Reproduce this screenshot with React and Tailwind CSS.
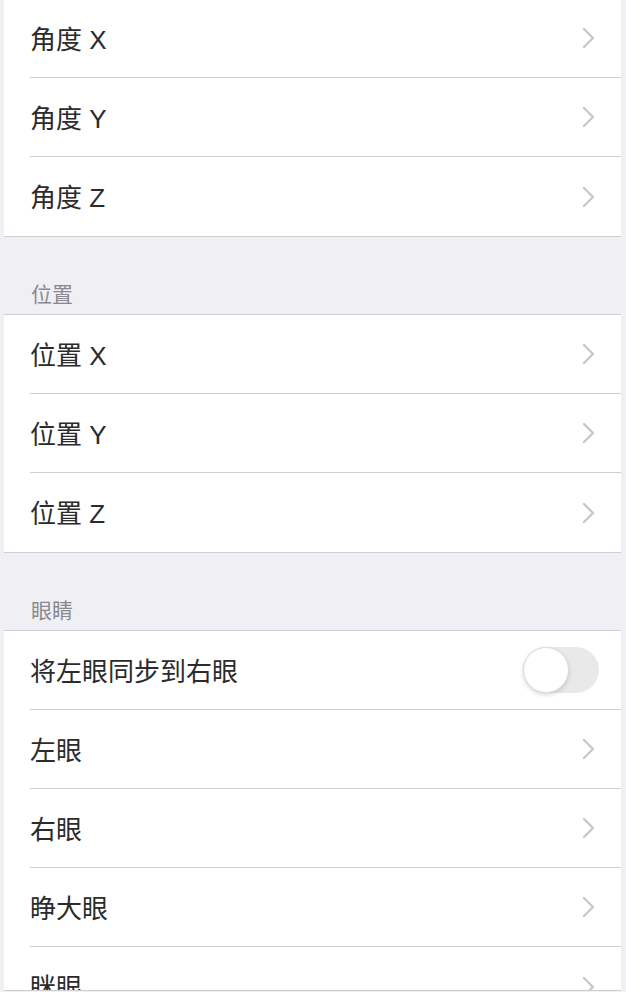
import React from 'react';

const font = { fontFamily: '"Liberation Sans", "Noto Sans CJK SC", sans-serif' };

const sections = [
  { title: null, rows: [{ label: '角度 X' }, { label: '角度 Y' }, { label: '角度 Z' }] },
  { title: '位置', rows: [{ label: '位置 X' }, { label: '位置 Y' }, { label: '位置 Z' }] },
  {
    title: '眼睛',
    rows: [
      { label: '将左眼同步到右眼', toggle: true },
      { label: '左眼' },
      { label: '右眼' },
      { label: '睁大眼' },
      { label: '眯眼' },
    ],
  },
];

const Chevron = () => (
  <svg width="14" height="22" viewBox="0 0 14 22" fill="none" className="mr-[3px]">
    <path d="M2 2l9 9-9 9" stroke="#c7c7cc" strokeWidth="2.4" strokeLinecap="round" strokeLinejoin="round" />
  </svg>
);

const Toggle = () => (
  <div className="relative w-[76px] h-[46px] rounded-full bg-[#e9e9ea]">
    <div className="absolute left-0 top-0 w-[46px] h-[46px] rounded-full bg-white border border-[#dcdcdc] shadow-[0_2px_4px_rgba(0,0,0,0.15)]" />
  </div>
);

const Row = ({ label, toggle, last }) => (
  <div className="pl-[26px]">
    <div className={`h-[79px] flex items-center justify-between pr-[22px] ${last ? '' : 'border-b border-[#cfcfd3]'}`}>
      <span className="text-[26px] text-[#2b2b2b] pt-[4px]">{label}</span>
      {toggle ? <Toggle /> : <Chevron />}
    </div>
  </div>
);

const App = () => {
  return (
    <div className="w-[626px] h-[992px] overflow-hidden bg-[#efeff4] flex flex-col" style={font}>
      <div className="h-[990px] overflow-hidden shrink-0">
        {sections.map((s, i) => (
          <div key={i}>
            {s.title ? (
              <div className="pt-[44px] pb-[5px] pl-[31px] text-[21px] leading-[28px] text-[#8a8a8e]">{s.title}</div>
            ) : null}
            <div className={`ml-[4px] mr-[5px] bg-white border-b border-[#cfcfd3] ${i === 0 ? '-mt-px' : 'border-t'}`}>
              {s.rows.map((r, j) => (
                <Row key={j} {...r} last={j === s.rows.length - 1} />
              ))}
            </div>
          </div>
        ))}
      </div>
      <div className="ml-[4px] mr-[5px] h-px bg-[#cfcfd3] shrink-0" />
    </div>
  );
};

export default App;
